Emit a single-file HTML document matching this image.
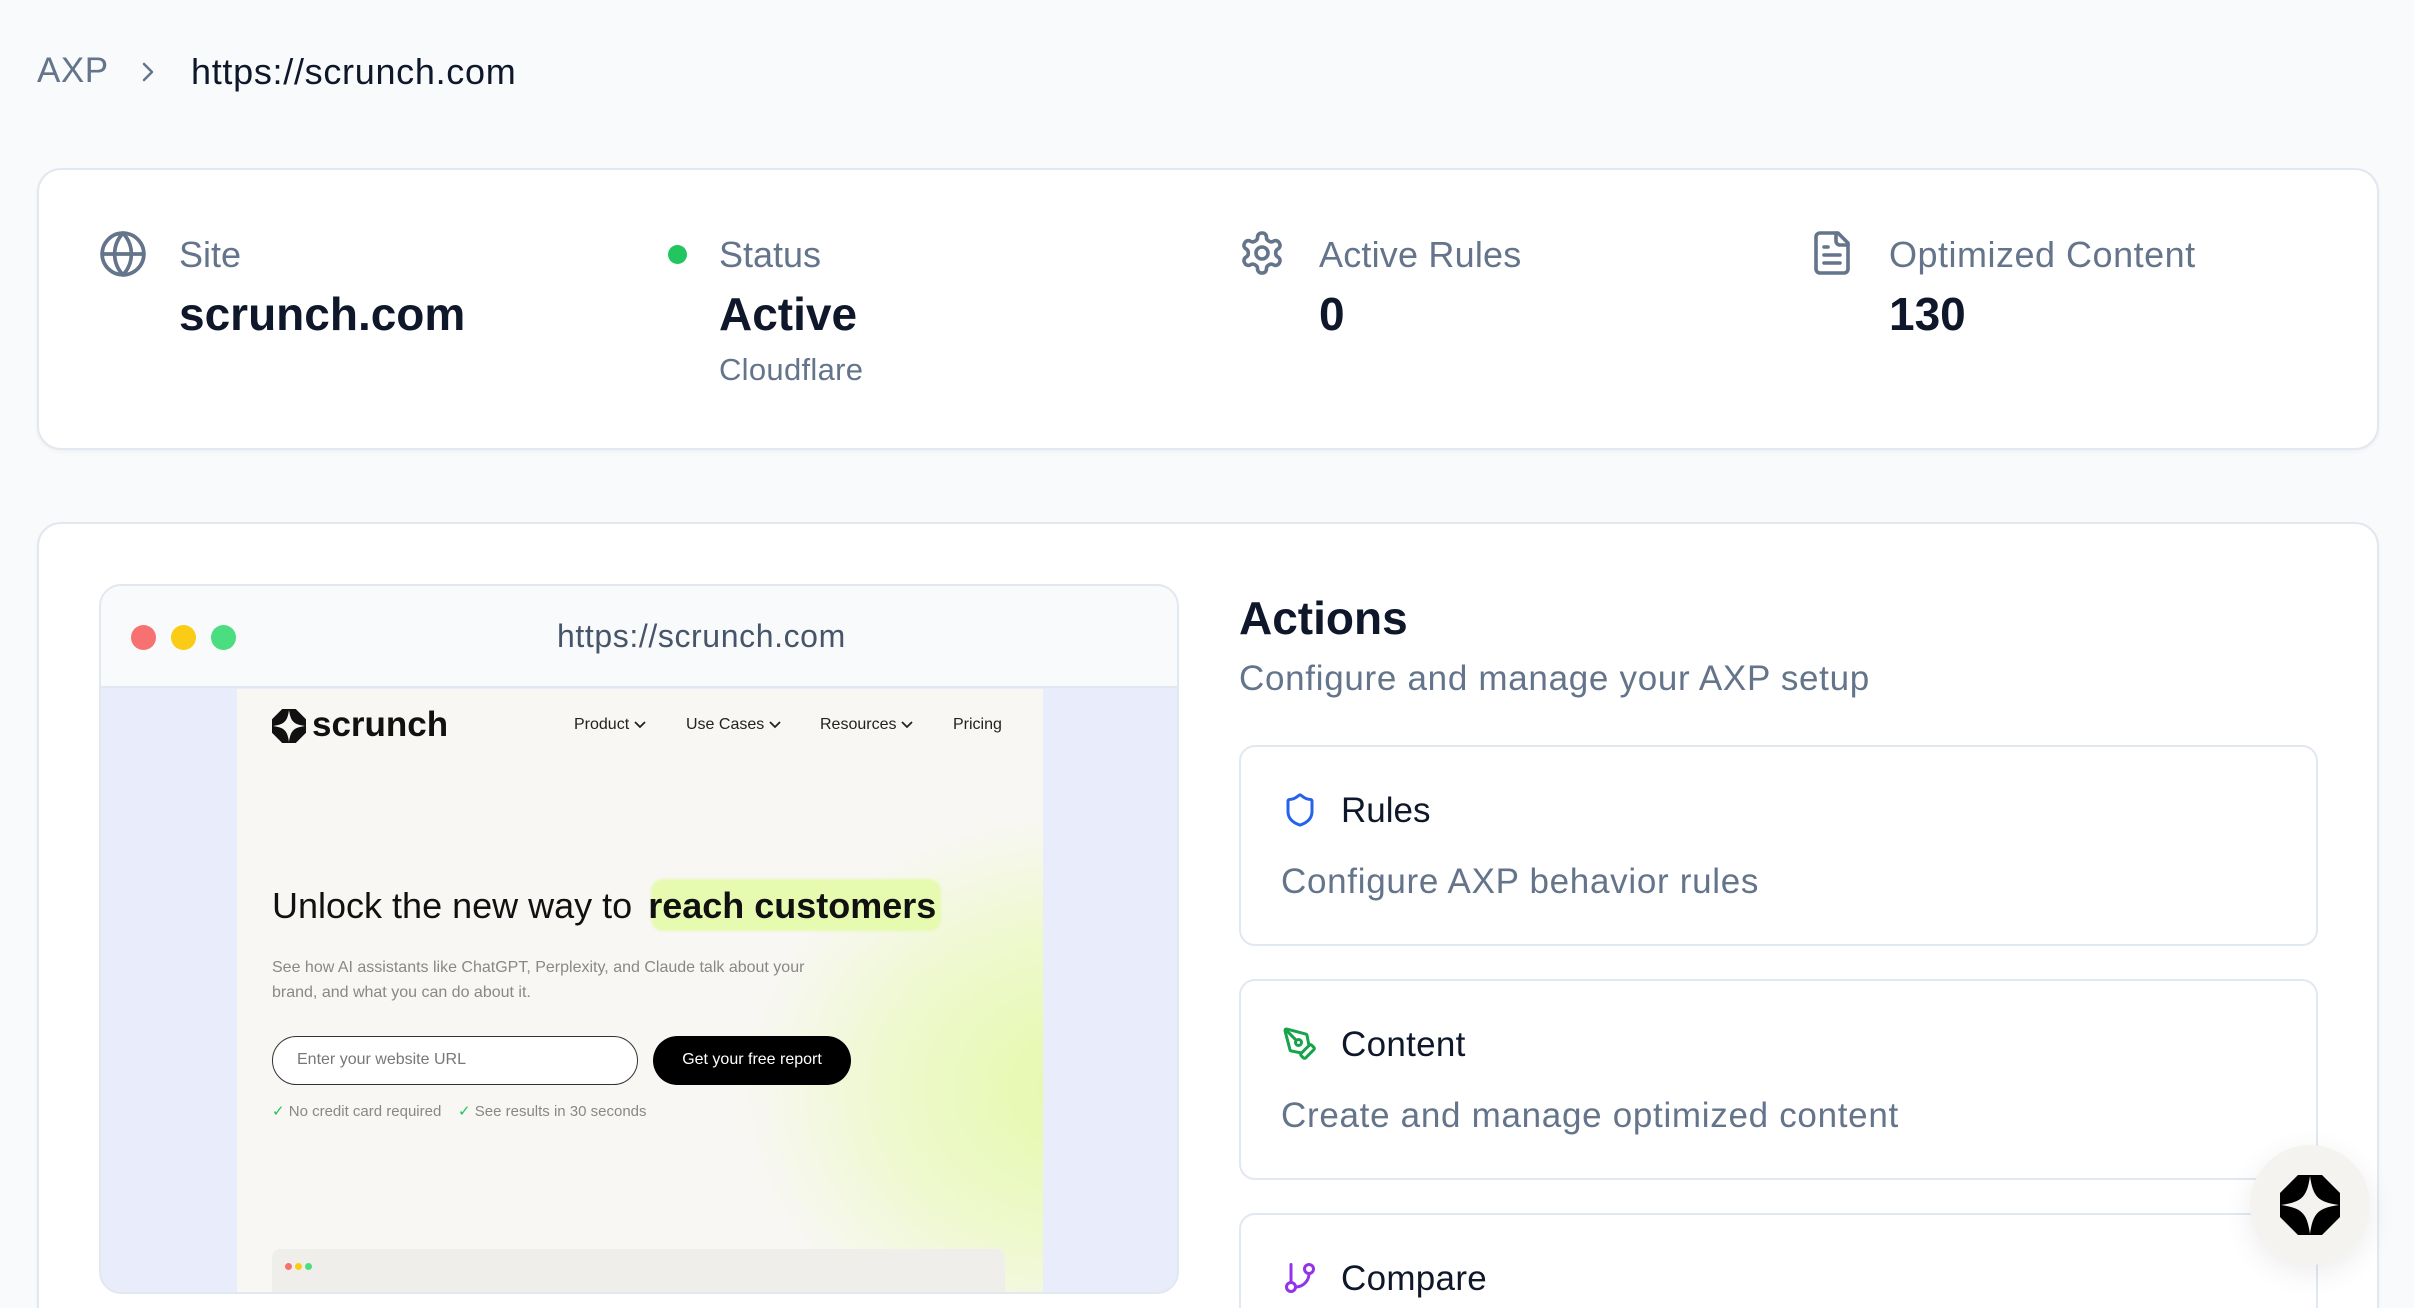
<!DOCTYPE html>
<html style="width:2414px;height:1308px;overflow:hidden"><head><meta charset="utf-8"><style>
*{margin:0;padding:0;box-sizing:border-box}
html,body{width:2414px;height:1308px;overflow:hidden}
body{background:#f8fafc;font-family:"Liberation Sans",sans-serif;color:#0f172a}
#root{position:relative;width:2414px;height:1308px;overflow:hidden}
.a{position:absolute;white-space:nowrap}
.card{position:absolute;background:#fff;border:2px solid #e2e8f0;border-radius:24px;box-shadow:0 2px 4px rgba(0,0,0,.04)}
.g{color:#64748b}
.ch{display:inline-block;vertical-align:middle;margin-left:4px}
</style></head><body><div id="root">
<div class="a g" style="left:37px;top:51px;font-size:35px;letter-spacing:.5px">AXP</div>
<svg class="a" style="left:136px;top:58px" width="24" height="28" viewBox="0 0 24 28"><path d="M8 6l8 8-8 8" fill="none" stroke="#64748b" stroke-width="2.5" stroke-linecap="round" stroke-linejoin="round"/></svg>
<div class="a" style="left:191px;top:51px;font-size:36px;letter-spacing:.7px;color:#0f172a">https://scrunch.com</div>

<div class="card" style="left:37px;top:168px;width:2342px;height:282px"></div>
<svg class="a" style="left:98px;top:229px" width="50" height="50" viewBox="0 0 24 24" fill="none" stroke="#64748b" stroke-width="1.8" stroke-linecap="round" stroke-linejoin="round"><circle cx="12" cy="12" r="10"/><path d="M12 2a14.5 14.5 0 0 0 0 20 14.5 14.5 0 0 0 0-20"/><path d="M2 12h20"/></svg>
<div class="a g" style="left:179px;top:234px;font-size:36px">Site</div>
<div class="a" style="left:179px;top:287px;font-size:46px;font-weight:bold">scrunch.com</div>
<div class="a" style="left:668px;top:245px;width:19px;height:19px;border-radius:50%;background:#22c55e"></div>
<div class="a g" style="left:719px;top:234px;font-size:36px">Status</div>
<div class="a" style="left:719px;top:287px;font-size:46px;font-weight:bold">Active</div>
<div class="a g" style="left:719px;top:352px;font-size:31px;letter-spacing:.3px">Cloudflare</div>
<svg class="a" style="left:1238px;top:229px" width="48" height="48" viewBox="0 0 24 24" fill="none" stroke="#64748b" stroke-width="1.8" stroke-linecap="round" stroke-linejoin="round"><path d="M12.22 2h-.44a2 2 0 0 0-2 2v.18a2 2 0 0 1-1 1.730l-.43.25a2 2 0 0 1-2 0l-.15-.08a2 2 0 0 0-2.73.73l-.22.38a2 2 0 0 0 .73 2.73l.15.1a2 2 0 0 1 1 1.72v.51a2 2 0 0 1-1 1.74l-.15.09a2 2 0 0 0-.73 2.73l.22.38a2 2 0 0 0 2.73.73l.15-.08a2 2 0 0 1 2 0l.43.25a2 2 0 0 1 1 1.73V20a2 2 0 0 0 2 2h.44a2 2 0 0 0 2-2v-.18a2 2 0 0 1 1-1.73l.43-.25a2 2 0 0 1 2 0l.15.08a2 2 0 0 0 2.73-.73l.22-.39a2 2 0 0 0-.73-2.73l-.15-.08a2 2 0 0 1-1-1.74v-.5a2 2 0 0 1 1-1.74l.15-.09a2 2 0 0 0 .73-2.73l-.22-.38a2 2 0 0 0-2.73-.73l-.15.08a2 2 0 0 1-2 0l-.43-.25a2 2 0 0 1-1-1.73V4a2 2 0 0 0-2-2z"/><circle cx="12" cy="12" r="3"/></svg>
<div class="a g" style="left:1319px;top:234px;font-size:36px;letter-spacing:.2px">Active Rules</div>
<div class="a" style="left:1319px;top:287px;font-size:46px;font-weight:bold">0</div>
<svg class="a" style="left:1808px;top:229px" width="48" height="48" viewBox="0 0 24 24" fill="none" stroke="#64748b" stroke-width="1.8" stroke-linecap="round" stroke-linejoin="round"><path d="M15 2H6a2 2 0 0 0-2 2v16a2 2 0 0 0 2 2h12a2 2 0 0 0 2-2V7z"/><path d="M14 2v4a2 2 0 0 0 2 2h4"/><path d="M10 9H8"/><path d="M16 13H8"/><path d="M16 17H8"/></svg>
<div class="a g" style="left:1889px;top:234px;font-size:36px;letter-spacing:.5px">Optimized Content</div>
<div class="a" style="left:1889px;top:287px;font-size:46px;font-weight:bold">130</div>

<div class="card" style="left:37px;top:522px;width:2342px;height:850px"></div>

<!-- browser mock -->
<div class="a" style="left:99px;top:584px;width:1080px;height:710px;border:2px solid #e2e8f0;border-radius:22px;overflow:hidden;background:#e8ecfb">
 <div style="position:absolute;left:0;top:0;right:0;height:102px;background:#f8fafc;border-bottom:2px solid #e2e8f0"></div>
 <div style="position:absolute;left:30px;top:39px;width:25px;height:25px;border-radius:50%;background:#f87171"></div>
 <div style="position:absolute;left:70px;top:39px;width:25px;height:25px;border-radius:50%;background:#facc15"></div>
 <div style="position:absolute;left:110px;top:39px;width:25px;height:25px;border-radius:50%;background:#4ade80"></div>
 <div style="position:absolute;left:456px;top:32px;font-size:32px;letter-spacing:.6px;color:#475569;white-space:nowrap">https://scrunch.com</div>
 <div style="position:absolute;left:136px;top:103px;width:806px;height:610px;background:#f8f7f4;overflow:hidden">
  <div style="position:absolute;left:500px;top:120px;width:500px;height:560px;background:radial-gradient(ellipse at 70% 50%,#e4f9a8 0%,rgba(232,250,180,.6) 40%,rgba(248,247,244,0) 70%)"></div>
  <svg style="position:absolute;left:35px;top:20px" width="34" height="34" viewBox="0 0 60 60"><polygon points="18,0 42,0 60,18 60,42 42,60 18,60 0,42 0,18" fill="#111"/><path d="M30 2 C33 22 38 27 58 30 C38 33 33 38 30 58 C27 38 22 33 2 30 C22 27 27 22 30 2Z" fill="#f8f7f4"/></svg>
  <div style="position:absolute;left:75px;top:16px;font-size:35px;font-weight:bold;color:#111">scrunch</div>
  <div style="position:absolute;left:337px;top:27px;font-size:16px;color:#222;white-space:nowrap">Product<svg class="ch" width="14" height="10" viewBox="0 0 14 10"><path d="M2 2l5 5 5-5" fill="none" stroke="#222" stroke-width="1.8"/></svg></div>
  <div style="position:absolute;left:449px;top:27px;font-size:16px;color:#222;white-space:nowrap">Use Cases<svg class="ch" width="14" height="10" viewBox="0 0 14 10"><path d="M2 2l5 5 5-5" fill="none" stroke="#222" stroke-width="1.8"/></svg></div>
  <div style="position:absolute;left:583px;top:27px;font-size:16px;color:#222;white-space:nowrap">Resources<svg class="ch" width="14" height="10" viewBox="0 0 14 10"><path d="M2 2l5 5 5-5" fill="none" stroke="#222" stroke-width="1.8"/></svg></div>
  <div style="position:absolute;left:716px;top:27px;font-size:16px;color:#222">Pricing</div>
  <div style="position:absolute;left:414px;top:190px;width:290px;height:52px;background:#e6fab0;border-radius:12px;filter:blur(1px)"></div>
  <div style="position:absolute;left:35px;top:196px;font-size:36px;color:#111;white-space:nowrap">Unlock the new way to <b style="margin-left:6px">reach customers</b></div>
  <div style="position:absolute;left:35px;top:266px;font-size:16px;color:#888;line-height:25px;white-space:nowrap">See how AI assistants like ChatGPT, Perplexity, and Claude talk about your<br>brand, and what you can do about it.</div>
  <div style="position:absolute;left:35px;top:347px;width:366px;height:49px;border:1.5px solid #333;border-radius:25px;background:#fff;font-size:16px;color:#777;padding:14px 0 0 24px">Enter your website URL</div>
  <div style="position:absolute;left:416px;top:347px;width:198px;height:49px;border-radius:25px;background:#000;font-size:16px;color:#fff;text-align:center;padding-top:15px">Get your free report</div>
  <div style="position:absolute;left:35px;top:413px;font-size:15px;color:#888;white-space:nowrap"><span style="color:#22c55e">✓</span> No credit card required &nbsp;&nbsp; <span style="color:#22c55e">✓</span> See results in 30 seconds</div>
  <div style="position:absolute;left:35px;top:560px;width:733px;height:60px;background:#efeeea;border-radius:8px"></div>
  <div style="position:absolute;left:48px;top:574px;width:7px;height:7px;border-radius:50%;background:#f87171"></div>
  <div style="position:absolute;left:58px;top:574px;width:7px;height:7px;border-radius:50%;background:#facc15"></div>
  <div style="position:absolute;left:68px;top:574px;width:7px;height:7px;border-radius:50%;background:#4ade80"></div>
 </div>
</div>

<div class="a" style="left:1239px;top:591px;font-size:46px;font-weight:bold">Actions</div>
<div class="a g" style="left:1239px;top:659px;font-size:35px;letter-spacing:.7px">Configure and manage your AXP setup</div>

<div class="card" style="left:1239px;top:745px;width:1079px;height:201px;border-radius:16px;box-shadow:none"></div>
<svg class="a" style="left:1282px;top:792px" width="36" height="36" viewBox="0 0 24 24" fill="none" stroke="#2563eb" stroke-width="2" stroke-linecap="round" stroke-linejoin="round"><path d="M20 13c0 5-3.5 7.5-7.66 8.95a1 1 0 0 1-.67-.01C7.5 20.5 4 18 4 13V6a1 1 0 0 1 1-1c2 0 4.5-1.2 6.24-2.72a1.17 1.17 0 0 1 1.52 0C14.510 3.81 17 5 19 5a1 1 0 0 1 1 1z"/></svg>
<div class="a" style="left:1341px;top:791px;font-size:35px">Rules</div>
<div class="a g" style="left:1281px;top:862px;font-size:35px;letter-spacing:.7px">Configure AXP behavior rules</div>

<div class="card" style="left:1239px;top:979px;width:1079px;height:201px;border-radius:16px;box-shadow:none"></div>
<svg class="a" style="left:1282px;top:1026px" width="36" height="36" viewBox="0 0 24 24" fill="none" stroke="#16a34a" stroke-width="2" stroke-linecap="round" stroke-linejoin="round"><path d="M15.707 21.293a1 1 0 0 1-1.414 0l-1.586-1.586a1 1 0 0 1 0-1.414l5.586-5.586a1 1 0 0 1 1.414 0l1.586 1.586a1 1 0 0 1 0 1.414z"/><path d="m18 13-1.375-6.874a1 1 0 0 0-.746-.776L3.235 2.028a1 1 0 0 0-1.207 1.207L5.35 15.879a1 1 0 0 0 .776.746L13 18"/><path d="m2.3 2.3 7.286 7.286"/><circle cx="11" cy="11" r="2"/></svg>
<div class="a" style="left:1341px;top:1025px;font-size:35px;letter-spacing:.3px">Content</div>
<div class="a g" style="left:1281px;top:1096px;font-size:35px;letter-spacing:.7px">Create and manage optimized content</div>

<div class="card" style="left:1239px;top:1213px;width:1079px;height:201px;border-radius:16px;box-shadow:none"></div>
<svg class="a" style="left:1282px;top:1260px" width="36" height="36" viewBox="0 0 24 24" fill="none" stroke="#9333ea" stroke-width="2" stroke-linecap="round" stroke-linejoin="round"><line x1="6" x2="6" y1="3" y2="15"/><circle cx="18" cy="6" r="3"/><circle cx="6" cy="18" r="3"/><path d="M18 9a9 9 0 0 1-9 9"/></svg>
<div class="a" style="left:1341px;top:1259px;font-size:35px;letter-spacing:.3px">Compare</div>

<div class="a" style="left:2250px;top:1145px;width:120px;height:120px;border-radius:50%;background:#f4f3f0;box-shadow:0 8px 30px rgba(0,0,0,.08)"></div>
<svg class="a" style="left:2280px;top:1175px" width="60" height="60" viewBox="0 0 60 60"><polygon points="18,0 42,0 60,18 60,42 42,60 18,60 0,42 0,18" fill="#000"/><path d="M30 1 C33 22 38 27 59 30 C38 33 33 38 30 59 C27 38 22 33 1 30 C22 27 27 22 30 1Z" fill="#f4f3f0"/></svg>
</div></body></html>
